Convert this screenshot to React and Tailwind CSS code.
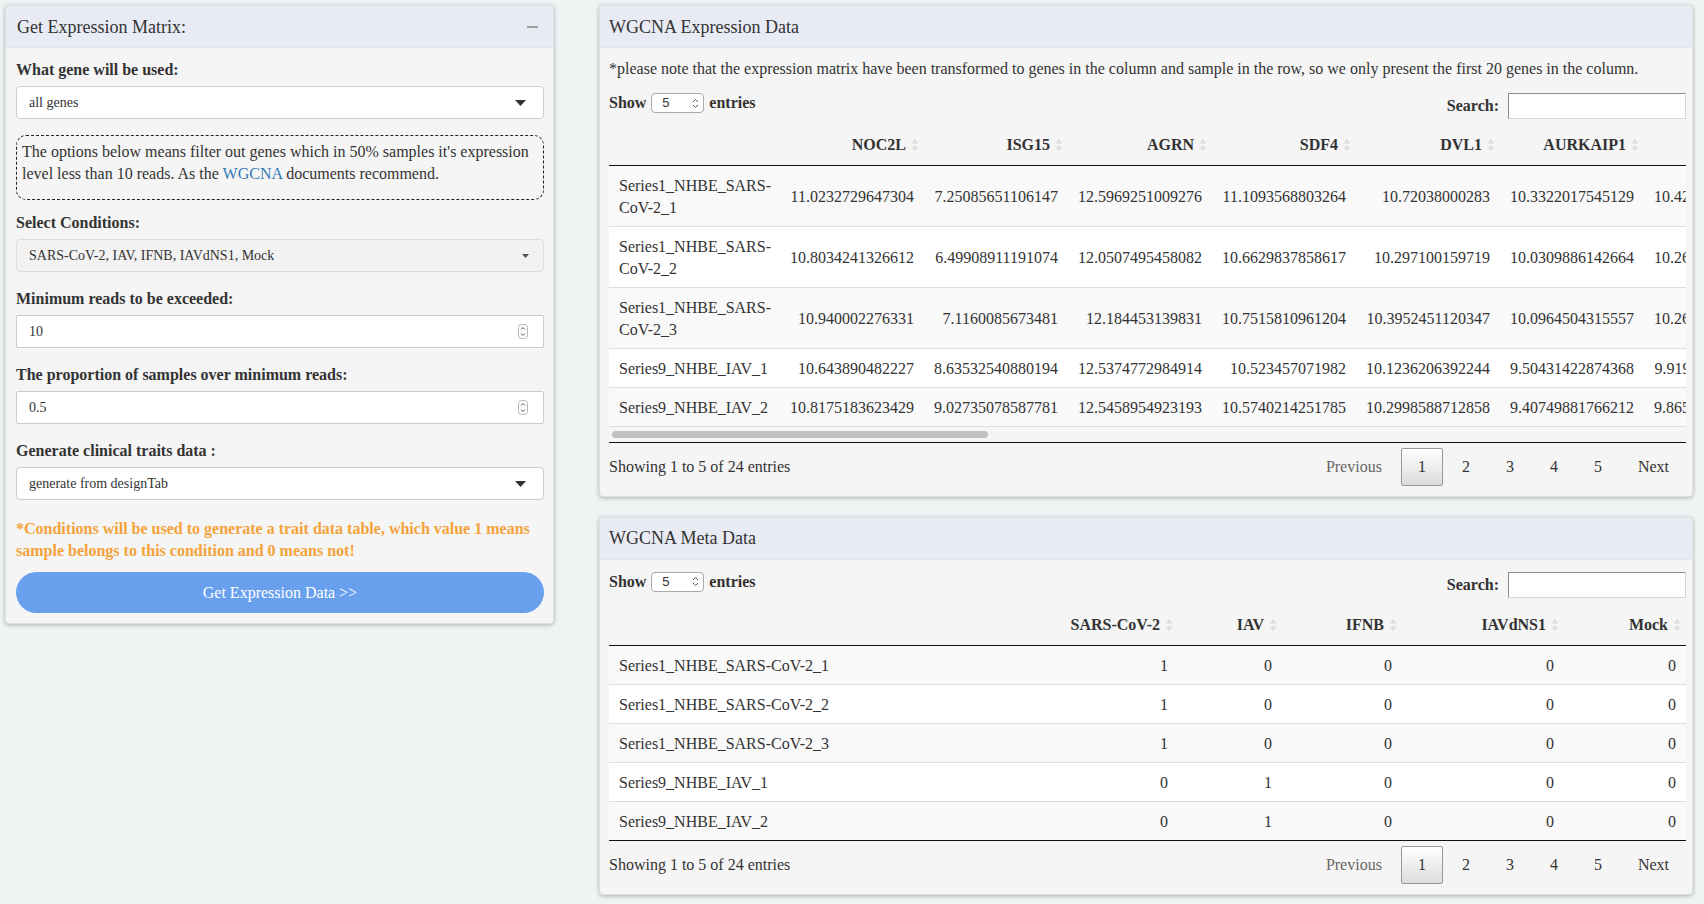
import React from 'react';

const genes = ['NOC2L', 'ISG15', 'AGRN', 'SDF4', 'DVL1', 'AURKAIP1', 'MRPL20'];

const exprRows = [
  { name: ['Series1_NHBE_SARS-', 'CoV-2_1'], vals: ['11.0232729647304', '7.25085651106147', '12.5969251009276', '11.1093568803264', '10.72038000283', '10.3322017545129', '10.4263183917203'] },
  { name: ['Series1_NHBE_SARS-', 'CoV-2_2'], vals: ['10.8034241326612', '6.49908911191074', '12.0507495458082', '10.6629837858617', '10.297100159719', '10.0309886142664', '10.2617720561537'] },
  { name: ['Series1_NHBE_SARS-', 'CoV-2_3'], vals: ['10.940002276331', '7.1160085673481', '12.184453139831', '10.7515810961204', '10.3952451120347', '10.0964504315557', '10.2654127983345'] },
  { name: ['Series9_NHBE_IAV_1'], vals: ['10.643890482227', '8.63532540880194', '12.5374772984914', '10.523457071982', '10.1236206392244', '9.50431422874368', '9.91987351129028'] },
  { name: ['Series9_NHBE_IAV_2'], vals: ['10.8175183623429', '9.02735078587781', '12.5458954923193', '10.5740214251785', '10.2998588712858', '9.40749881766212', '9.86512403387441'] },
];

const metaCols = ['SARS-CoV-2', 'IAV', 'IFNB', 'IAVdNS1', 'Mock'];
const metaWidths = ['w-[138px]', 'w-[104px]', 'w-[120px]', 'w-[162px]', 'w-[122px]'];
const metaRows = [
  ['Series1_NHBE_SARS-CoV-2_1', 1, 0, 0, 0, 0],
  ['Series1_NHBE_SARS-CoV-2_2', 1, 0, 0, 0, 0],
  ['Series1_NHBE_SARS-CoV-2_3', 1, 0, 0, 0, 0],
  ['Series9_NHBE_IAV_1', 0, 1, 0, 0, 0],
  ['Series9_NHBE_IAV_2', 0, 1, 0, 0, 0],
];

const SortIcon = () => (
  <svg width="8" height="14" viewBox="0 0 8 14" className="shrink-0">
    <path d="M4 1L7.5 5.5H0.5z" fill="#dadada" />
    <path d="M4 13L0.5 8.5H7.5z" fill="#dadada" />
  </svg>
);

const Spinner = () => (
  <svg width="10" height="15" viewBox="0 0 10 15">
    <rect x="0.5" y="0.5" width="9" height="14" rx="3" fill="white" stroke="#b5b5b5" />
    <path d="M3 5.5L5 3.5L7 5.5" stroke="#555" fill="none" />
    <path d="M3 9.5L5 11.5L7 9.5" stroke="#555" fill="none" />
  </svg>
);

const HeadCell = ({ label }) => (
  <th className="h-[42px] p-0 font-bold text-right border-b border-[#111]">
    <div className="flex items-center justify-end gap-[5px] pr-[5px] pt-[2px] whitespace-nowrap">
      <span>{label}</span>
      <SortIcon />
    </div>
  </th>
);

const CardHeader = ({ title, pad, children }) => (
  <div className={`h-[42px] flex items-center justify-between bg-[#e8ebf3] rounded-t-[4px] border-b border-[#e1e4ec] ${pad}`}>
    <span className="text-[18px]">{title}</span>
    {children}
  </div>
);

const TableControls = () => (
  <div className="flex justify-between items-start h-[26px]">
    <div className="flex items-center h-[20px] mt-[1px] font-bold">
      <span>Show</span>
      <div className="mx-[5px] w-[53px] h-[20px] bg-white border border-[#aaa] rounded-[4px] flex items-center justify-between pl-[10px] pr-[4px] font-['Liberation_Sans',sans-serif] font-normal text-[13px]">
        <span>5</span>
        <svg width="7" height="11" viewBox="0 0 7 11">
          <path d="M1 4L3.5 1.5L6 4" stroke="#555" fill="none" />
          <path d="M1 7L3.5 9.5L6 7" stroke="#555" fill="none" />
        </svg>
      </div>
      <span>entries</span>
    </div>
    <div className="flex items-center gap-[9px] h-[26px] pt-[2px]">
      <span className="font-bold">Search:</span>
      <div className="w-[178px] h-[26px] bg-white border border-t-[#8c8c8c] border-l-[#8c8c8c] border-r-[#d6d6d6] border-b-[#d6d6d6]" />
    </div>
  </div>
);

const Pager = () => (
  <div className="flex items-center">
    <span className="px-[16px] py-[8px] border border-transparent text-[#666]">Previous</span>
    <span className="ml-[2px] w-[42px] h-[38px] flex items-center justify-center border border-[#979797] rounded-[2px] bg-linear-to-b from-white to-[#dcdcdc]">1</span>
    {[2, 3, 4, 5].map((n) => (
      <span key={n} className="ml-[2px] w-[42px] h-[38px] flex items-center justify-center border border-transparent">{n}</span>
    ))}
    <span className="ml-[2px] px-[16px] py-[8px] border border-transparent">Next</span>
  </div>
);

const Footer = () => (
  <div className="mt-[5px] flex items-center justify-between h-[38px]">
    <span>Showing 1 to 5 of 24 entries</span>
    <Pager />
  </div>
);

const card = 'rounded-[4px] border border-[#e0e0e0] bg-[#f5f5f5] shadow-[0_1px_4px_rgba(0,0,0,0.28)]';

export default function App() {
  return (
    <div className="min-h-[904px] bg-[#eef3f3] font-['Liberation_Serif','Times_New_Roman',serif] text-[16px] leading-[22px] text-[#333]">
      <div className="flex items-start pt-[5px] pl-[5px]">
        {/* Left: Get Expression Matrix */}
        <div className={`w-[549px] ${card}`}>
          <CardHeader title="Get Expression Matrix:" pad="pl-[11px]">
            <span className="w-[11px] h-[2px] bg-[#a0a0a0] mr-[15px]" />
          </CardHeader>
          <div className="pt-[11px] pb-[10px] pl-[10px] pr-[9px]">
            <label className="block font-bold mb-[5px]">What gene will be used:</label>
            <div className="h-[33px] bg-white border border-[#ccc] rounded-[4px] flex items-center justify-between pl-[12px] pr-[17px] text-[14px]">
              <span>all genes</span>
              <svg width="11" height="6" viewBox="0 0 11 6"><path d="M0 0h11L5.5 6z" fill="#333" /></svg>
            </div>

            <div className="mt-[16px] border border-dashed border-[#222] rounded-[10px] pl-[5px] pr-[4px] pt-[5px] pb-[14px]">
              The options below means filter out genes which in 50% samples it's expression<br />
              level less than 10 reads. As the <a className="text-[#337ab7]">WGCNA</a> documents recommend.
            </div>

            <label className="block font-bold mt-[12px] mb-[5px]">Select Conditions:</label>
            <div className="h-[33px] bg-[#f2f2f2] border border-[#dcdcdc] rounded-[4px] flex items-center justify-between pl-[12px] pr-[14px] text-[14px]">
              <span>SARS-CoV-2, IAV, IFNB, IAVdNS1, Mock</span>
              <svg width="7" height="4" viewBox="0 0 7 4"><path d="M0 0h7L3.5 4z" fill="#555" /></svg>
            </div>

            <label className="block font-bold mt-[16px] mb-[5px]">Minimum reads to be exceeded:</label>
            <div className="h-[33px] bg-white border border-[#ccc] rounded-[2px] flex items-center justify-between pl-[12px] pr-[15px] text-[14px]">
              <span>10</span>
              <Spinner />
            </div>

            <label className="block font-bold mt-[16px] mb-[5px]">The proportion of samples over minimum reads:</label>
            <div className="h-[33px] bg-white border border-[#ccc] rounded-[2px] flex items-center justify-between pl-[12px] pr-[15px] text-[14px]">
              <span>0.5</span>
              <Spinner />
            </div>

            <label className="block font-bold mt-[16px] mb-[5px]">Generate clinical traits data :</label>
            <div className="h-[33px] bg-white border border-[#ccc] rounded-[4px] flex items-center justify-between pl-[12px] pr-[17px] text-[14px]">
              <span>generate from designTab</span>
              <svg width="11" height="6" viewBox="0 0 11 6"><path d="M0 0h11L5.5 6z" fill="#333" /></svg>
            </div>

            <p className="mt-[18px] font-bold text-[#f4a33b]">
              *Conditions will be used to generate a trait data table, which value 1 means<br />
              sample belongs to this condition and 0 means not!
            </p>

            <button className="mt-[10px] w-full h-[41px] rounded-full bg-[#68a0ee] text-white text-[16px]">
              Get Expression Data &gt;&gt;
            </button>
          </div>
        </div>

        {/* Right column */}
        <div className="ml-[45px] w-[1094px] flex flex-col gap-[20px]">
          {/* Expression data */}
          <div className={card}>
            <CardHeader title="WGCNA Expression Data" pad="pl-[9px]" />
            <div className="pt-[10px] pb-[10px] pl-[9px] pr-[6px]">
              <p className="mb-[12px]">*please note that the expression matrix have been transformed to genes in the column and sample in the row, so we only present the first 20 genes in the column.</p>
              <TableControls />
              <div className="mt-[5px] w-[1077px] overflow-hidden border-b border-[#111]">
                <table className="table-fixed border-collapse w-[1179px]">
                  <colgroup>
                    <col className="w-[171px]" />
                    {genes.map((g) => <col key={g} className="w-[144px]" />)}
                  </colgroup>
                  <thead>
                    <tr>
                      <th className="h-[42px] p-0 border-b border-[#111]" />
                      {genes.map((g) => <HeadCell key={g} label={g} />)}
                    </tr>
                  </thead>
                  <tbody>
                    {exprRows.map((r, i) => (
                      <tr key={i} className={i % 2 === 0 ? 'bg-[#f9f9f9]' : 'bg-white'}>
                        <td className="px-[10px] pt-[9px] pb-[7px] border-b border-[#ddd] whitespace-nowrap align-middle">
                          {r.name.map((n, j) => <div key={j}>{n}</div>)}
                        </td>
                        {r.vals.map((v, j) => (
                          <td key={j} className="px-[10px] pt-[9px] pb-[7px] border-b border-[#ddd] text-right whitespace-nowrap align-middle">{v}</td>
                        ))}
                      </tr>
                    ))}
                  </tbody>
                </table>
                {/* horizontal scrollbar */}
                <div className="h-[15px] pt-[4px] pl-[3px]">
                  <div className="w-[376px] h-[7px] rounded-full bg-[#c1c1c1]" />
                </div>
              </div>
              <Footer />
            </div>
          </div>

          {/* Meta data */}
          <div className={card}>
            <CardHeader title="WGCNA Meta Data" pad="pl-[9px]" />
            <div className="pt-[11px] pb-[10px] pl-[9px] pr-[6px]">
              <TableControls />
              <div className="mt-[7px] w-[1077px] border-b border-[#111]">
                <table className="table-fixed border-collapse w-full">
                  <colgroup>
                    <col className="w-[431px]" />
                    {metaWidths.map((w, i) => <col key={i} className={w} />)}
                  </colgroup>
                  <thead>
                    <tr>
                      <th className="h-[42px] p-0 border-b border-[#111]" />
                      {metaCols.map((c) => <HeadCell key={c} label={c} />)}
                    </tr>
                  </thead>
                  <tbody>
                    {metaRows.map((r, i) => (
                      <tr key={i} className={i % 2 === 0 ? 'bg-[#f9f9f9]' : 'bg-white'}>
                        {r.map((v, j) => (
                          <td
                            key={j}
                            className={`px-[10px] pt-[9px] pb-[7px] whitespace-nowrap ${i > 0 ? 'border-t border-[#ddd]' : ''} ${j === 0 ? 'text-left' : 'text-right'}`}
                          >
                            {v}
                          </td>
                        ))}
                      </tr>
                    ))}
                  </tbody>
                </table>
              </div>
              <Footer />
            </div>
          </div>
        </div>
      </div>
    </div>
  );
}
